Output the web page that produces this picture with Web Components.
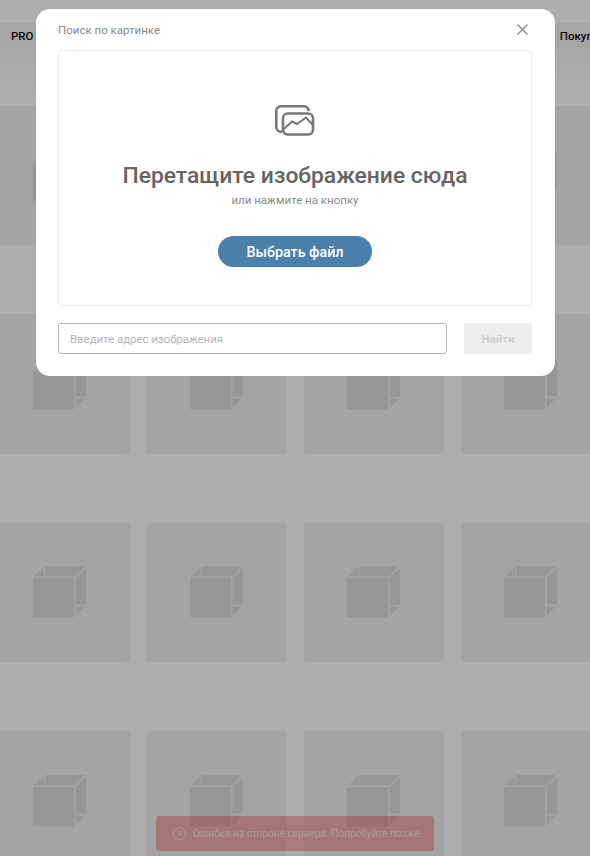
<!DOCTYPE html>
<html lang="ru">
<head>
<meta charset="utf-8">
<title>Поиск по картинке</title>
<style>
  html, body { margin: 0; padding: 0; height: 856px; overflow: hidden; background: #f8f8f8; }
  body { font-family: Roboto, "Liberation Sans", sans-serif; }
</style>
</head>
<body>
<catalog-page></catalog-page>
<error-toast>Ошибка на стороне сервера. Попробуйте позже</error-toast>
<image-search-modal></image-search-modal>

<script>
class TopBar extends HTMLElement {
  constructor() {
    super();
    this.shadowDOM = this.attachShadow({ mode: 'open' });
  }

  connectedCallback() {
    this.shadowDOM.innerHTML = `
      <style>
      :host { display: block; padding-top: 23px; }
      .band {
        height: 25px;
        display: flex;
        justify-content: space-between;
        align-items: center;
        background: #ececec;
        padding-left: 11px;
        font-size: 11.5px;
        font-weight: 500;
        color: #111;
        white-space: nowrap;
      }
      .buy { margin-right: -16px; }
      .below { height: 58px; background: linear-gradient(#f0f0f0, #fbfbfb); }
      </style>
      <div class="band"><span>PRO</span><span class="buy">Покупки</span></div>
      <div class="below"></div>
    `;
  }
}

class ProductCard extends HTMLElement {
  constructor() {
    super();
    this.shadowDOM = this.attachShadow({ mode: 'open' });
  }

  connectedCallback() {
    this.shadowDOM.innerHTML = `
      <style>
      :host {
        display: flex;
        justify-content: center;
        align-items: center;
        height: 139.3px;
        background: #ebebeb;
        border-radius: 3px;
      }
      svg { display: block; width: 54px; height: 52px; }
      </style>
      <svg viewBox="0 0 54 52">
        <rect x="0" y="12" width="41" height="39.5" fill="#d8d8d8"/>
        <path d="M1 10.5 L11 1 V10.5 Z M12 0 H52 L42 10.5 H12 Z" fill="#d8d8d8"/>
        <path d="M42.5 12 L53 2 V38.5 H42.5 Z M42.5 50 V40.5 H52 Z" fill="#d8d8d8"/>
      </svg>
    `;
  }
}

class CatalogPage extends HTMLElement {
  constructor() {
    super();
    this.shadowDOM = this.attachShadow({ mode: 'open' });
  }

  connectedCallback() {
    const cards = Array(16).fill('<product-card></product-card>').join('');
    this.shadowDOM.innerHTML = `
      <style>
      :host { display: block; height: 856px; overflow: hidden; background: #f8f8f8; }
      .grid {
        display: grid;
        grid-template-columns: repeat(4, 140px);
        column-gap: 17px;
        row-gap: 69px;
        margin-left: -10px;
      }
      </style>
      <top-bar></top-bar>
      <div class="grid">${cards}</div>
    `;
  }
}

class ImageSearchModal extends HTMLElement {
  constructor() {
    super();
    this.shadowDOM = this.attachShadow({ mode: 'open' });
  }

  connectedCallback() {
    this.shadowDOM.innerHTML = `
      <style>
      * { box-sizing: border-box; }
      :host {
        position: fixed;
        inset: 0;
        display: flex;
        justify-content: center;
        align-items: flex-start;
        padding: 9px 0 0 1px;
        background: rgba(0, 0, 0, 0.3);
        font-family: Roboto, "Liberation Sans", sans-serif;
      }
      .modal {
        width: 519px;
        height: 367px;
        background: #fff;
        border-radius: 14px;
        padding: 0 23px 0 22px;
        display: flex;
        flex-direction: column;
      }
      .head {
        height: 41px;
        display: flex;
        justify-content: space-between;
        align-items: center;
        font-size: 11.5px;
        color: #8a8a8a;
      }
      .close { display: block; width: 11px; height: 11px; margin-right: 4px; }
      .drop {
        height: 256px;
        border: 1px dotted #dcdcdc;
        border-radius: 4px;
        display: flex;
        flex-direction: column;
        align-items: center;
      }
      .pics { display: block; width: 40px; height: 31px; margin-top: 54px; }
      h2 {
        margin: 24px 0 0;
        font-size: 22.85px;
        line-height: 32px;
        font-weight: 500;
        color: #646464;
      }
      p { margin: 0; font-size: 11.5px; line-height: 16px; color: #8a8a8a; }
      .pick {
        margin-top: 28px;
        width: 154px;
        height: 31px;
        border: 0;
        border-radius: 16px;
        background: #4a80ab;
        color: #fff;
        font: 500 14.3px Roboto, "Liberation Sans", sans-serif;
      }
      .row { display: flex; gap: 17px; margin-top: 17px; }
      .url {
        flex: 1;
        height: 31px;
        border: 1px solid #b4b4b4;
        border-radius: 3px;
        padding: 0 11px;
        font-size: 11.4px;
        display: flex;
        align-items: center;
        color: #b5b5b5;
      }
      .find {
        width: 68px;
        height: 31px;
        border: 0;
        border-radius: 3px;
        background: #eeeeee;
        color: #cdcdcd;
        font: 500 11.5px Roboto, "Liberation Sans", sans-serif;
      }
      </style>
      <div class="modal">
        <div class="head">
          <span>Поиск по картинке</span>
          <svg class="close" viewBox="0 0 11 11"><path d="M.5.5l10 10M10.5.5l-10 10" stroke="#858585" stroke-width="1.3" fill="none"/></svg>
        </div>
        <div class="drop">
          <svg class="pics" viewBox="0 0 40 31" fill="none" stroke="#777" stroke-width="2.6">
            <path d="M7 26.7 H6 a4.7 4.7 0 0 1 -4.7 -4.7 V6 a4.7 4.7 0 0 1 4.7 -4.7 H29 a5 5 0 0 1 4.7 5"/>
            <rect x="8" y="8.5" width="30" height="21" rx="4.7"/>
            <path d="M9 24 L17 16.5 L22 19 L31 12.5 L38 20" stroke-width="2"/>
          </svg>
          <h2>Перетащите изображение сюда</h2>
          <p>или нажмите на кнопку</p>
          <button class="pick">Выбрать файл</button>
        </div>
        <div class="row">
          <div class="url">Введите адрес изображения</div>
          <button class="find">Найти</button>
        </div>
      </div>
    `;
  }
}

class ErrorToast extends HTMLElement {
  constructor() {
    super();
    this.shadowDOM = this.attachShadow({ mode: 'open' });
  }

  connectedCallback() {
    this.shadowDOM.innerHTML = `
      <style>
      :host {
        position: fixed;
        left: 156px;
        top: 816px;
        width: 278px;
        height: 35px;
        box-sizing: border-box;
        display: flex;
        align-items: center;
        gap: 7px;
        padding-left: 17px;
        border-radius: 3px;
        background: rgba(235, 90, 90, 0.45);
        color: #fff;
        font: 10.1px Roboto, "Liberation Sans", sans-serif;
        white-space: nowrap;
      }
      svg { display: block; flex: none; width: 13px; height: 13px; }
      span { opacity: .55; }
      </style>
      <svg viewBox="0 0 13 13" fill="none" stroke="#fff" stroke-opacity=".55">
        <circle cx="6.5" cy="6.5" r="6"/>
        <path d="M4 4l5 5M9 4l-5 5"/>
      </svg>
      <span><slot></slot></span>
    `;
  }
}

customElements.define('top-bar', TopBar);
customElements.define('product-card', ProductCard);
customElements.define('catalog-page', CatalogPage);
customElements.define('image-search-modal', ImageSearchModal);
customElements.define('error-toast', ErrorToast);
</script>
</body>
</html>
